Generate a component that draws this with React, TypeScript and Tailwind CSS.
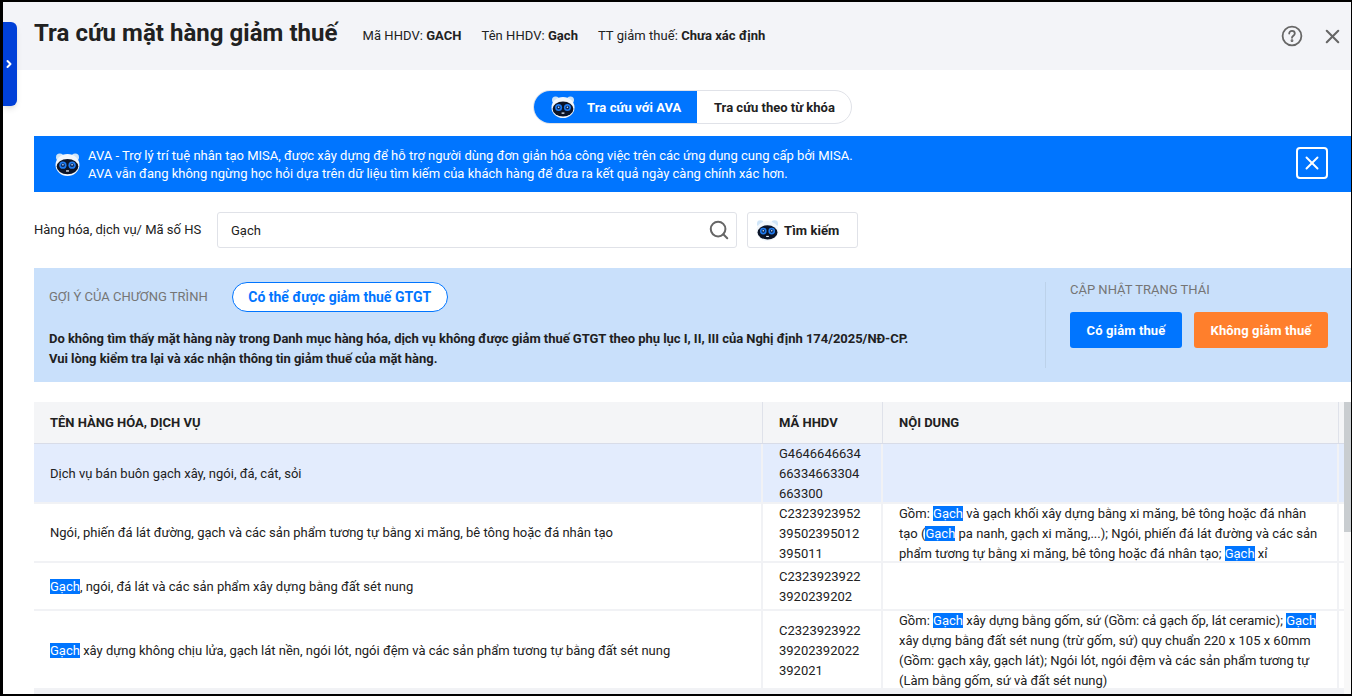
import React from "react";
import { X, Search, ChevronRight } from "lucide-react";

const font = { fontFamily: "Roboto, 'Noto Sans', sans-serif" };

function Ava({ size = 24 }: { size?: number }) {
  return (
    <svg width={size} height={size} viewBox="0 0 24 24" className="shrink-0">
      <circle cx="4.6" cy="5" r="3.6" fill="#cfe4f7" />
      <circle cx="19.4" cy="5" r="3.6" fill="#cfe4f7" />
      <ellipse cx="12" cy="12.5" rx="11.5" ry="10.5" fill="#f2f7fc" />
      <ellipse cx="12" cy="14" rx="10.4" ry="7.4" fill="#0b1428" />
      <circle cx="7.6" cy="12.6" r="3.5" fill="#1f7bf0" />
      <circle cx="16.4" cy="12.6" r="3.5" fill="#1f7bf0" />
      <circle cx="7.6" cy="12.6" r="1.9" fill="#0d2a5c" />
      <circle cx="16.4" cy="12.6" r="1.9" fill="#0d2a5c" />
      <circle cx="7.6" cy="12.2" r="0.8" fill="#cfe8ff" />
      <circle cx="16.4" cy="12.2" r="0.8" fill="#cfe8ff" />
      <path d="M10.6 17.6 h2.8 v1.2 h-2.8 z" fill="#e8f2ff" />
    </svg>
  );
}

function Hl({ children }: { children: React.ReactNode }) {
  return <span className="bg-[#0075ff] text-white">{children}</span>;
}

function Row({
  h,
  bg,
  nameClass = "pt-[2px]",
  name,
  code,
  content,
}: {
  h: string;
  bg: string;
  nameClass?: string;
  name: React.ReactNode;
  code: string[];
  content?: React.ReactNode;
}) {
  return (
    <div className={`flex border-b-2 border-[#f1f2f5] text-[13px] leading-[20px] text-[#212121] ${h} ${bg}`}>
      <div className={`flex w-[729px] shrink-0 items-center border-r-2 border-[#f1f2f5] pl-4 ${nameClass}`}>
        <div className="whitespace-nowrap">{name}</div>
      </div>
      <div className="flex w-[120px] shrink-0 items-center border-r-2 border-[#f1f2f5] pl-4 pt-[2px]">
        <div>
          {code.map((c) => (
            <div key={c}>{c}</div>
          ))}
        </div>
      </div>
      <div className="flex w-[456px] shrink-0 items-center border-r-2 border-[#f1f2f5] pl-4 pr-[16px] pt-[2px]">
        <div>{content}</div>
      </div>
    </div>
  );
}

export default function App() {
  return (
    <div style={font} className="relative h-[696px] w-[1352px] overflow-hidden border-t-2 border-r border-b-2 border-l-[3px] border-black bg-white">
      <div className="absolute left-0 top-[20px] z-10 flex h-[84px] w-[14px] items-center justify-center rounded-r-md bg-[#0040d8] pr-[2px] shadow-md">
        <ChevronRight size={12} strokeWidth={4} color="#fff" />
      </div>

      <header className="flex h-[68px] items-center bg-[#f3f4f8] pl-[31px] pr-[7px]">
        <h1 className="mb-[6px] text-[24px] font-bold leading-8 tracking-[0.04px] text-[#212121]">Tra cứu mặt hàng giảm thuế</h1>
        <div className="ml-[25px] flex items-center gap-[20px] text-[13px] tracking-[0.04px] text-[#212121]">
          <span>Mã HHDV: <b>GACH</b></span>
          <span>Tên HHDV: <b>Gạch</b></span>
          <span>TT giảm thuế: <b>Chưa xác định</b></span>
        </div>
        <div className="ml-auto flex items-center gap-[18px] text-[#666]">
          <svg width="22" height="22" viewBox="0 0 22 22" fill="none" stroke="#666" strokeWidth="1.8">
            <circle cx="11" cy="11" r="9.4" />
            <path d="M8.2 8.6c0-1.6 1.2-2.7 2.8-2.7s2.8 1 2.8 2.5c0 2.3-2.8 2.3-2.8 4.4" strokeLinecap="round" />
            <circle cx="11" cy="15.7" r="0.5" fill="#666" />
          </svg>
          <X size={23} strokeWidth={2.2} />
        </div>
      </header>

      <div className="ml-[31px] flex justify-center pt-[20px]">
        <div className="flex h-[34px] w-[319px] overflow-hidden rounded-full border border-[#e0e2e8] text-[13px] font-bold">
          <div className="flex w-[163px] items-center gap-[12px] bg-[#0075ff] pl-[17px] text-white">
            <Ava size={24} />
            <span className="pt-[2px] tracking-[0.08px]">Tra cứu với AVA</span>
          </div>
          <div className="flex flex-1 items-center pl-[17px] pt-[2px] text-[#212121]">Tra cứu theo từ khóa</div>
        </div>
      </div>

      <div className="ml-[31px] mt-[12px] flex h-[56px] w-[1317px] items-center bg-[#0075ff] pl-[21px] pr-[23px] text-[13px] leading-[18px] text-white">
        <Ava size={25} />
        <div className="ml-[8px] pt-[2px]">
          <div>AVA - Trợ lý trí tuệ nhân tạo MISA, được xây dựng để hỗ trợ người dùng đơn giản hóa công việc trên các ứng dụng cung cấp bởi MISA.</div>
          <div>AVA vẫn đang không ngừng học hỏi dựa trên dữ liệu tìm kiếm của khách hàng để đưa ra kết quả ngày càng chính xác hơn.</div>
        </div>
        <div className="mb-[2px] ml-auto flex h-[32px] w-[32px] items-center justify-center rounded-[4px] border-2 border-white">
          <X size={22} strokeWidth={2.1} />
        </div>
      </div>

      <div className="ml-[31px] mt-[20px] flex h-[36px] items-center text-[13px] text-[#212121]">
        <span className="w-[183px]">Hàng hóa, dịch vụ/ Mã số HS</span>
        <div className="flex h-[36px] w-[520px] items-center justify-between rounded-[3px] border border-[#e0e2e8] pl-[13px] pr-[6px]">
          <span className="pt-[2px]">Gạch</span>
          <Search size={22} strokeWidth={2.2} color="#666" />
        </div>
        <div className="ml-[10px] flex h-[36px] w-[111px] items-center gap-[5px] rounded-[3px] border border-[#e0e2e8] pl-[8px] font-bold">
          <Ava size={23} />
          <span className="pt-[2px] tracking-[0.08px]">Tìm kiếm</span>
        </div>
      </div>

      <div className="ml-[31px] mt-[20px] flex h-[114px] w-[1317px] bg-[#c9e0fb] text-[#212121]">
        <div className="w-[1011px] shrink-0 pl-[15px] pt-[14px]">
          <div className="flex items-center">
            <span className="text-[13px] text-[#757575]">GỢI Ý CỦA CHƯƠNG TRÌNH</span>
            <span className="ml-[24px] flex h-[30px] w-[216px] items-center justify-center rounded-full border border-[#0075ff] bg-white text-[14px] font-bold text-[#0075ff]">Có thể được giảm thuế GTGT</span>
          </div>
          <div className="mt-[17px] text-[13px] font-bold leading-[20px] tracking-[-0.04px]">
            <div>Do không tìm thấy mặt hàng này trong Danh mục hàng hóa, dịch vụ không được giảm thuế GTGT theo phụ lục I, II, III của Nghị định 174/2025/NĐ-CP.</div>
            <div>Vui lòng kiểm tra lại và xác nhận thông tin giảm thuế của mặt hàng.</div>
          </div>
        </div>
        <div className="my-[14px] border-l border-[#bcd2ea] pl-[24px]">
          <div className="text-[13px] leading-[16px] text-[#757575]">CẬP NHẬT TRẠNG THÁI</div>
          <div className="mt-[14px] flex gap-[12px] text-[13px] font-bold tracking-[0.12px] text-white">
            <div className="flex h-[36px] w-[112px] items-center justify-center rounded-[3px] bg-[#0075ff] pt-[2px]">Có giảm thuế</div>
            <div className="flex h-[36px] w-[134px] items-center justify-center rounded-[3px] bg-[#ff7f2c] pt-[2px]">Không giảm thuế</div>
          </div>
        </div>
      </div>

      <div className="ml-[31px] mt-[20px] flex w-[1317px]">
        <div className="w-[1310px] shrink-0">
          <div className="flex h-[42px] border-b border-[#d8dce8] bg-[#f4f5f7] text-[13px] font-bold text-[#212121]">
            <div className="flex w-[729px] items-center border-r border-[#dfe2ea] pl-4">TÊN HÀNG HÓA, DỊCH VỤ</div>
            <div className="flex w-[120px] items-center border-r border-[#dfe2ea] pl-4">MÃ HHDV</div>
            <div className="flex w-[456px] items-center border-r border-[#dfe2ea] pl-4">NỘI DUNG</div>
          </div>
          <Row
            h="h-[60px]"
            bg="bg-[#e3ecfd]"
            name="Dịch vụ bán buôn gạch xây, ngói, đá, cát, sỏi"
            code={["G4646646634", "66334663304", "663300"]}
          />
          <Row
            h="h-[59px]"
            bg="bg-white"
            nameClass=""
            name="Ngói, phiến đá lát đường, gạch và các sản phẩm tương tự bằng xi măng, bê tông hoặc đá nhân tạo"
            code={["C2323923952", "39502395012", "395011"]}
            content={<>Gồm: <Hl>Gạch</Hl> và gạch khối xây dựng bằng xi măng, bê tông hoặc đá nhân tạo (<Hl>Gạch</Hl> pa nanh, gạch xi măng,...); Ngói, phiến đá lát đường và các sản phẩm tương tự bằng xi măng, bê tông hoặc đá nhân tạo; <Hl>Gạch</Hl> xỉ</>}
          />
          <Row
            h="h-[48px]"
            bg="bg-white"
            name={<><Hl>Gạch</Hl>, ngói, đá lát và các sản phẩm xây dựng bằng đất sét nung</>}
            code={["C2323923922", "3920239202"]}
          />
          <Row
            h="h-[79px]"
            bg="bg-white"
            name={<><Hl>Gạch</Hl> xây dựng không chịu lửa, gạch lát nền, ngói lót, ngói đệm và các sản phẩm tương tự bằng đất sét nung</>}
            code={["C2323923922", "39202392022", "392021"]}
            content={<>Gồm: <Hl>Gạch</Hl> xây dựng bằng gốm, sứ (Gồm: cả gạch ốp, lát ceramic); <Hl>Gạch</Hl> xây dựng bằng đất sét nung (trừ gốm, sứ) quy chuẩn 220 x 105 x 60mm (Gồm: gạch xây, gạch lát); Ngói lót, ngói đệm và các sản phẩm tương tự (Làm bằng gốm, sứ và đất sét nung)</>}
          />
          <div className="h-[8px] bg-[#eff0f4]" />
        </div>
        <div className="h-[292px] w-[7px] bg-[#f8f8f8]">
          <div className="h-[130px] bg-[#c9cdd0]" />
        </div>
      </div>
    </div>
  );
}
